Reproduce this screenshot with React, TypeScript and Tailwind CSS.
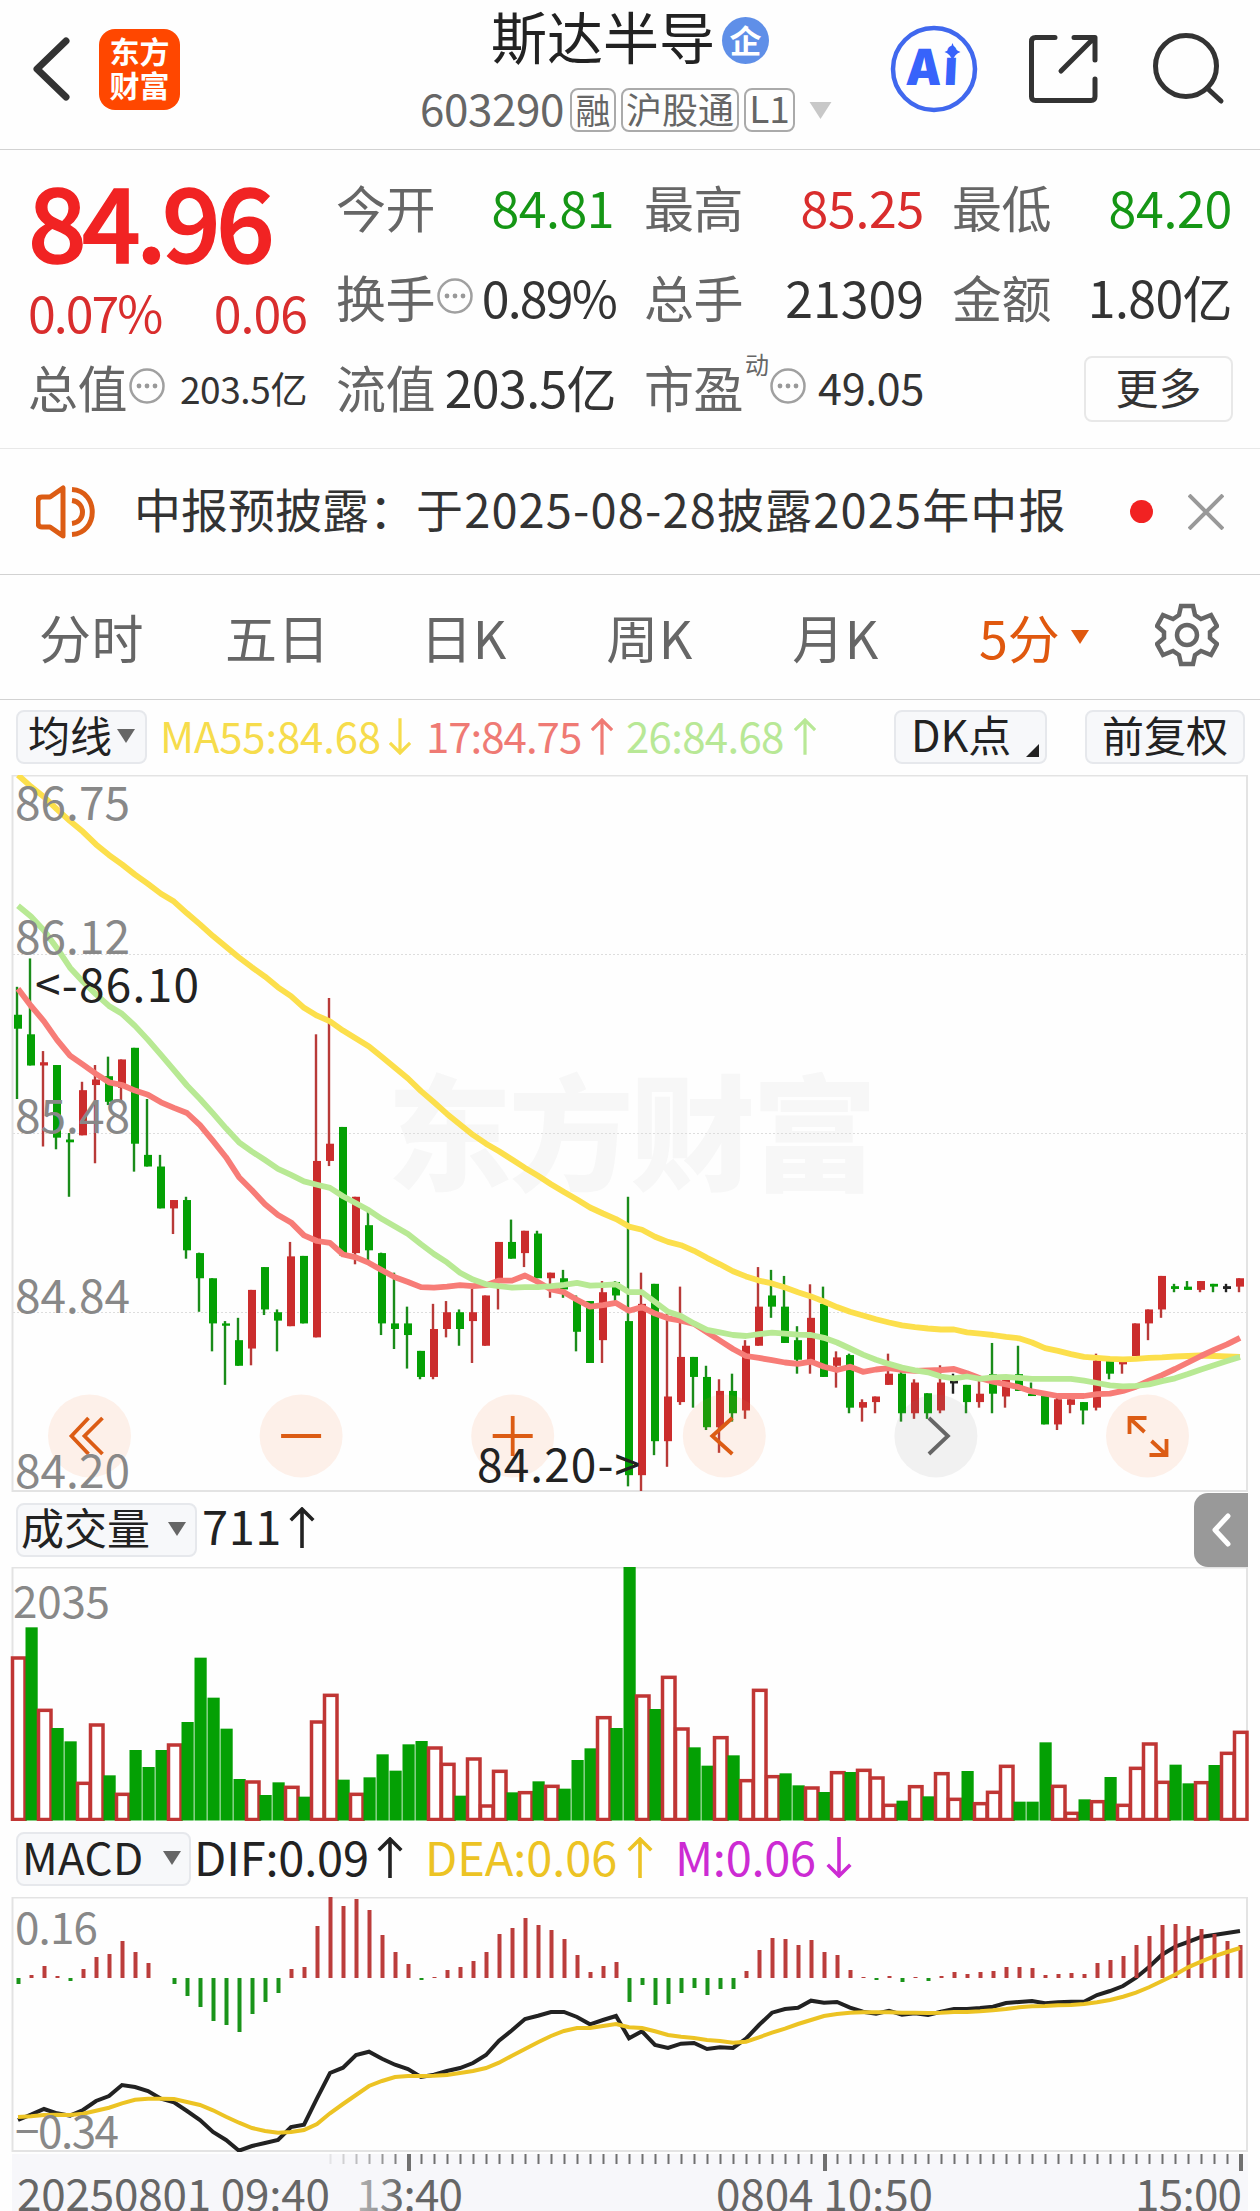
import clsx from "clsx";

type Candle = [string, number, number, number, number];

// color, high, body top, body bottom, low
const candles: Candle[] = [
  ["g", 466, 526, 556, 707], ["g", 405, 568, 635, 635], ["r", 604, 628, 635, 809], ["g", 634, 634, 790, 815],
  ["g", 780, 794, 800, 917], ["r", 670, 688, 785, 785], ["r", 634, 665, 677, 845], ["g", 616, 658, 713, 720],
  ["r", 622, 622, 683, 715], ["g", 597, 597, 803, 863], ["g", 707, 827, 852, 852], ["g", 827, 852, 942, 942],
  ["r", 924, 924, 942, 997], ["g", 917, 924, 1032, 1050], ["g", 1037, 1038, 1092, 1164], ["g", 1092, 1092, 1189, 1249],
  ["g", 1184, 1189, 1194, 1321], ["g", 1177, 1225, 1280, 1280], ["r", 1117, 1117, 1243, 1279], ["g", 1068, 1068, 1159, 1171],
  ["g", 1159, 1165, 1183, 1249], ["r", 1014, 1045, 1195, 1195], ["g", 1044, 1044, 1189, 1189], ["r", 568, 840, 1219, 1219],
  ["r", 490, 803, 840, 851], ["g", 767, 767, 1043, 1043], ["r", 917, 917, 1038, 1062], ["g", 948, 978, 1032, 1056],
  ["g", 1037, 1038, 1189, 1214], ["g", 1080, 1189, 1201, 1244], ["g", 1153, 1189, 1214, 1286], ["g", 1248, 1248, 1304, 1309],
  ["r", 1147, 1201, 1304, 1309], ["r", 1141, 1165, 1201, 1219], ["g", 1159, 1165, 1201, 1237], ["r", 1115, 1165, 1184, 1274],
  ["r", 1129, 1129, 1237, 1237], ["r", 1014, 1014, 1095, 1159], ["g", 966, 1014, 1050, 1050], ["r", 990, 990, 1038, 1068],
  ["g", 990, 996, 1092, 1092], ["r", 1080, 1080, 1092, 1134], ["g", 1074, 1092, 1116, 1134], ["g", 1129, 1140, 1207, 1249],
  ["g", 1141, 1141, 1274, 1274], ["r", 1098, 1122, 1225, 1274], ["g", 1098, 1100, 1129, 1141], ["g", 917, 1184, 1515, 1539],
  ["r", 1080, 1147, 1515, 1549], ["g", 1104, 1104, 1442, 1472], ["r", 1165, 1346, 1442, 1497], ["r", 1110, 1261, 1358, 1364],
  ["g", 1261, 1261, 1304, 1370], ["g", 1280, 1304, 1412, 1418], ["r", 1309, 1334, 1412, 1467], ["g", 1297, 1334, 1382, 1400],
  ["r", 1225, 1237, 1376, 1394], ["r", 1068, 1153, 1237, 1237], ["g", 1074, 1129, 1153, 1177], ["g", 1087, 1153, 1231, 1231],
  ["g", 1195, 1225, 1267, 1297], ["r", 1105, 1177, 1270, 1297], ["g", 1110, 1147, 1304, 1304], ["r", 1249, 1262, 1280, 1327],
  ["g", 1254, 1257, 1370, 1382], ["r", 1352, 1358, 1370, 1400], ["r", 1346, 1346, 1358, 1382], ["r", 1254, 1297, 1321, 1321],
  ["g", 1285, 1297, 1382, 1400], ["r", 1309, 1316, 1382, 1394], ["g", 1339, 1339, 1382, 1394], ["r", 1279, 1316, 1376, 1382],
  ["k", 1297, 1312, 1318, 1340], ["g", 1321, 1321, 1358, 1382], ["r", 1309, 1340, 1358, 1370], ["g", 1231, 1298, 1340, 1382],
  ["r", 1309, 1310, 1346, 1370], ["g", 1237, 1298, 1334, 1334], ["g", 1316, 1340, 1345, 1345], ["g", 1340, 1345, 1406, 1406],
  ["r", 1345, 1352, 1406, 1418], ["r", 1352, 1352, 1364, 1382], ["g", 1358, 1358, 1376, 1406], ["r", 1254, 1269, 1370, 1376],
  ["g", 1269, 1270, 1297, 1309], ["r", 1269, 1271, 1277, 1297], ["r", 1189, 1189, 1259, 1259], ["r", 1159, 1159, 1189, 1225],
  ["r", 1087, 1087, 1159, 1177], ["g", 1104, 1109, 1115, 1122], ["g", 1098, 1110, 1117, 1117], ["r", 1098, 1098, 1117, 1122],
  ["g", 1104, 1104, 1110, 1122], ["k", 1104, 1109, 1115, 1122], ["r", 1092, 1092, 1110, 1122],
];

const ma55 = [
  11, 36, 58, 85, 110, 133, 160, 183, 203, 225, 245, 266, 283, 308, 332, 357, 380, 403, 424, 444, 467, 486, 511, 528,
  540, 560, 577, 594, 617, 640, 663, 690, 714, 739, 762, 784, 803, 819, 837, 855, 872, 890, 907, 923, 940, 953, 965, 981,
  988, 1003, 1014, 1021, 1033, 1048, 1062, 1077, 1088, 1097, 1103, 1112, 1122, 1131, 1142, 1154, 1164, 1172, 1180, 1187,
  1193, 1197, 1200, 1202, 1202, 1208, 1211, 1214, 1218, 1221, 1230, 1242, 1248, 1255, 1261, 1263, 1265, 1266, 1265, 1263,
  1262, 1260, 1259, 1258, 1259, 1260, 1261,
];

const ma26 = [
  292, 315, 345, 383, 425, 455, 482, 507, 524, 550, 580, 612, 645, 678, 707, 738, 770, 800, 820, 838, 857, 870, 884, 891,
  898, 916, 931, 946, 965, 981, 997, 1019, 1040, 1058, 1080, 1095, 1105, 1109, 1112, 1111, 1111, 1109, 1106, 1102, 1108,
  1107, 1105, 1122, 1122, 1143, 1164, 1173, 1189, 1203, 1208, 1214, 1216, 1212, 1209, 1211, 1213, 1214, 1220, 1230, 1243,
  1256, 1267, 1276, 1284, 1290, 1294, 1303, 1307, 1303, 1308, 1305, 1304, 1306, 1308, 1308, 1308, 1308, 1312, 1317, 1322,
  1324, 1323, 1320, 1313, 1307, 1298, 1288, 1279, 1270, 1261,
];

const ma17 = [
  470, 507, 540, 580, 614, 633, 653, 671, 677, 689, 698, 714, 726, 737, 763, 797, 832, 875, 903, 933, 956, 972, 1000,
  1012, 1016, 1041, 1047, 1059, 1075, 1090, 1100, 1111, 1112, 1110, 1107, 1109, 1107, 1097, 1097, 1086, 1100, 1116, 1122,
  1138, 1153, 1150, 1145, 1162, 1154, 1168, 1178, 1183, 1190, 1208, 1226, 1244, 1259, 1263, 1268, 1273, 1276, 1271, 1282,
  1289, 1282, 1293, 1288, 1285, 1289, 1291, 1290, 1289, 1287, 1296, 1307, 1314, 1320, 1326, 1335, 1340, 1345, 1345, 1345,
  1341, 1340, 1334, 1325, 1312, 1300, 1287, 1273, 1259, 1246, 1234, 1220,
];

// negative = green bar
const volumes = [
  498, -412, 655, -714, -754, 874, 699, -856, 907, -780, -831, -780, 759, -696, -503, -623, -716, -867, 870, -915, -877,
  886, -920, 690, 610, -869, 907, -862, -793, -842, -763, -753, 768, 817, -917, 801, 942, 838, -907, 902, -874, 883, -896,
  -810, -775, 677, -714, -231, 612, -657, 556, 711, -772, -827, 737, -796, 866, 595, 854, -850, -886, 888, -906, 842, -846,
  835, 858, 940, -932, 884, -919, 845, 922, -843, 935, 901, 823, -935, -935, -757, 883, 964, -928, 929, -861, 940, 829,
  756, 871, -824, -880, 872, -825, 784, 721,
];

const macd = [
  492, 465, 438, 468, 483, 447, 411, 402, 363, 396, 429, 474, 492, 528, 561, 603, 615, 636, 582, 546, 519, 447, 441, 318,
  231, 258, 237, 270, 345, 396, 432, 480, 471, 450, 441, 423, 396, 342, 324, 294, 315, 330, 357, 405, 456, 438, 426, 546,
  495, 555, 552, 519, 504, 525, 507, 507, 453, 390, 354, 357, 375, 360, 396, 405, 450, 471, 480, 468, 486, 471, 483, 468,
  456, 462, 456, 453, 441, 441, 444, 465, 462, 459, 462, 429, 420, 408, 375, 348, 315, 312, 318, 327, 342, 363, 375,
];

const dif = [
  900, 884, 867, 880, 887, 870, 843, 828, 795, 801, 813, 836, 847, 873, 900, 936, 960, 992, 978, 969, 960, 921, 914, 835,
  759, 743, 705, 695, 716, 734, 747, 771, 764, 753, 744, 729, 705, 662, 631, 597, 587, 576, 576, 591, 613, 600, 588, 655,
  634, 675, 684, 671, 669, 687, 682, 684, 656, 615, 578, 567, 563, 542, 548, 546, 563, 575, 581, 572, 584, 580, 585, 575,
  567, 567, 564, 560, 549, 546, 543, 550, 547, 545, 545, 525, 513, 498, 473, 441, 404, 380, 366, 351, 345, 339, 333,
];

const dea = [
  891, 889, 885, 884, 885, 881, 872, 863, 850, 839, 836, 836, 837, 846, 855, 871, 890, 908, 924, 933, 938, 936, 930, 912,
  880, 852, 825, 798, 783, 771, 768, 768, 767, 765, 759, 753, 744, 728, 707, 687, 667, 648, 633, 624, 624, 618, 612, 622,
  624, 634, 645, 650, 654, 660, 663, 668, 665, 652, 638, 626, 612, 600, 588, 582, 578, 577, 577, 577, 578, 578, 579, 578,
  576, 576, 574, 571, 567, 562, 559, 558, 556, 555, 552, 547, 540, 530, 518, 502, 483, 464, 442, 425, 409, 396, 384,
];

const colors: Record<string, string> = { r: "#cb2d2d", g: "#04a004", k: "#222222" };
const wicks: Record<string, string> = { r: "#b83a38", g: "#1a8c1a", k: "#222222" };

const barX = (i: number) => 18 + i * 13;
const priceY = (v: number) => ((v - 11) * 716) / 1538;
const subY = (v: number) => (v - 231) / 3;

const toPoints = (data: number[], y: (v: number) => number) =>
  data.map((v, i) => `${barX(i)},${y(v).toFixed(1)}`).join(" ");

const Arrow = ({ down, className }: { down?: boolean; className?: string }) => (
  <svg viewBox="0 0 24 40" className={className} fill="none" stroke="currentColor" strokeWidth="3.5">
    {down ? <path d="M12 0V38M1 27l11 11 11-11" /> : <path d="M12 40V2M1 13L12 2l11 11" />}
  </svg>
);

const Caret = ({ className }: { className?: string }) => (
  <svg viewBox="0 0 18 14" className={className} fill="currentColor">
    <path d="M0 0h18L9 14z" />
  </svg>
);

const More = ({ className }: { className?: string }) => (
  <svg viewBox="0 0 36 36" className={clsx("h-9 w-9 shrink-0", className)}>
    <circle cx="18" cy="18" r="16.5" fill="none" stroke="#a0a0a0" strokeWidth="2.5" />
    <circle cx="10" cy="18" r="2.4" fill="#999" />
    <circle cx="18" cy="18" r="2.4" fill="#999" />
    <circle cx="26" cy="18" r="2.4" fill="#999" />
  </svg>
);

const Header = () => (
  <header className="flex h-[150px] border-b border-[#d2d2d2]">
    <svg viewBox="0 0 38 66" className="mt-9 ml-8 h-[66px] w-[38px]" fill="none" stroke="#333" strokeWidth="7" strokeLinecap="round" strokeLinejoin="round">
      <path d="M34 5L5 33l29 28" />
    </svg>
    <div className="mt-[29px] ml-[29px] flex h-[81px] w-[81px] flex-col items-center justify-center rounded-[16px] bg-[#ff4700] pb-1.5 text-[30px] leading-[34px] font-bold text-white">
      <span>东方</span>
      <span>财富</span>
    </div>
    <div className="ml-[240px] w-[420px]">
      <div className="ml-[71px] flex h-[78px] items-start">
        <h1 className="mt-[4px] w-[228px] text-[56px] leading-[62px] whitespace-nowrap text-[#222]">斯达半导</h1>
        <span className="mt-[17px] ml-[3px] flex h-[47px] w-[47px] items-center justify-center rounded-full bg-[#5f8fe8] pb-1 text-[32px] leading-none font-bold text-white">
          企
        </span>
      </div>
      <div className="mt-[9px] flex h-[46px] items-center text-[#666]">
        <span className="w-[150px] pb-1.5 text-[44px] leading-none tracking-[-0.4px]">603290</span>
        <span className="flex h-11 w-[46px] items-center justify-center rounded-[8px] border-2 border-[#aaa] pb-1 text-[35px] leading-none">融</span>
        <span className="ml-[5px] flex h-11 w-[118px] items-center justify-center rounded-[8px] border-2 border-[#aaa] pb-1 text-[36px] leading-none">
          沪股通
        </span>
        <span className="ml-[5px] flex h-11 w-[51px] items-center justify-center rounded-[8px] border-2 border-[#aaa] pb-1.5 text-[37px] leading-none">L1</span>
        <Caret className="ml-[12px] h-[17px] w-[27px] text-[#c8c8c8]" />
      </div>
    </div>
    <div className="relative mt-[25px] ml-[50px] h-[88px] w-[88px]">
      <svg viewBox="0 0 88 88" className="h-full w-full">
        <circle cx="44" cy="44" r="41" fill="none" stroke="#4068ee" strokeWidth="4.5" />
        <path d="M62.500 18q2 7 8 9q-6 2-8 9q-2-7-8-9q6-2 8-9z" fill="#3763fb" />
      </svg>
      <span className="absolute top-[16px] left-[16px] origin-left -skew-x-3 scale-x-90 font-['Inter'] text-[50px] leading-[52px] font-black tracking-[3px] text-[#3763fb]">
        Ai
      </span>
    </div>
    <svg viewBox="0 0 72 72" className="mt-[33px] ml-[49px] h-[72px] w-[72px]" fill="none" stroke="#333" strokeWidth="5" strokeLinecap="round" strokeLinejoin="round">
      <path d="M28 4.500H8.500Q4.500 4.500 4.500 8.500V63.500Q4.500 67.500 8.500 67.500H64Q68 67.500 68 63.500V46M34 38L66 6M47 4.500H68V27" />
    </svg>
    <svg viewBox="0 0 72 72" className="mt-[33px] ml-[54px] h-[72px] w-[72px]" fill="none" stroke="#333" strokeWidth="5" strokeLinecap="round">
      <circle cx="33" cy="33" r="30.500" />
      <path d="M54 55l14 13" />
    </svg>
  </header>
);

const Cell = ({ label, value, tone }: { label: string; value: string; tone: string }) => (
  <div className="flex h-[90px] items-center justify-between">
    <span className="text-[50px] leading-none tracking-[-0.500px] text-[#666]">{label}</span>
    <span className={clsx("mr-[2px] text-[50px] leading-none whitespace-nowrap", tone)}>{value}</span>
  </div>
);

const Quote = () => (
  <section className="grid h-[299px] grid-cols-[282px_282px_282px_282px] gap-x-[26px] border-b border-[#e8e8e8] px-7 pt-[11px]">
    <div className="text-[#d92d2d]">
      <div className="h-[120px] pt-0.5 text-[103px] leading-[112px] font-medium tracking-[-4.700px] text-[#f12323] [-webkit-text-stroke:1.5px_#f12323]">
        84.96
      </div>
      <div className="flex h-[60px] items-center justify-between text-[50px] leading-none">
        <span className="tracking-[-2px]">0.07%</span>
        <span className="mr-[3px] tracking-[-1px]">0.06</span>
      </div>
      <div className="flex h-[90px] items-center text-[50px] leading-none tracking-[-0.500px] text-[#666]">
        <span>总值</span>
        <More className="ml-[2px]" />
        <span className="mr-[3px] ml-auto pt-1 text-[37px] tracking-[-0.400px] whitespace-nowrap text-[#333]">203.5亿</span>
      </div>
    </div>
    <div>
      <Cell label="今开" value="84.81" tone="text-[#159615] tracking-[-0.500px] pr-[2px]" />
      <div className="flex h-[90px] items-center text-[50px] leading-none tracking-[-0.500px] text-[#666]">
        <span>换手</span>
        <More className="ml-[2px]" />
        <span className="mr-[2px] ml-auto text-[50px] tracking-[-1.800px] text-[#333]">0.89%</span>
      </div>
      <Cell label="流值" value="203.5亿" tone="text-[#333] text-[49px] tracking-[-0.600px]" />
    </div>
    <div>
      <Cell label="最高" value="85.25" tone="text-[#d92d2d] tracking-[-0.300px]" />
      <Cell label="总手" value="21309" tone="text-[#333]" />
      <div className="flex h-[90px] items-center text-[50px] leading-none tracking-[-0.500px] text-[#666]">
        <span>市盈</span>
        <span className="mb-[44px] ml-[2px] text-[24px] leading-none">动</span>
        <More className="ml-px" />
        <span className="mr-[2px] ml-auto text-[43px] tracking-[-0.300px] text-[#333]">49.05</span>
      </div>
    </div>
    <div>
      <Cell label="最低" value="84.20" tone="text-[#159615] tracking-[-0.300px]" />
      <Cell label="金额" value="1.80亿" tone="text-[#333] tracking-[-0.600px]" />
      <div className="flex h-[90px] items-center justify-end">
        <button className="mt-[6px] mr-px h-[66px] w-[149px] rounded-[8px] border-2 border-[#e8e8e8] pb-1.5 text-[43px] leading-none text-[#333]">
          更多
        </button>
      </div>
    </div>
  </section>
);

const Notice = () => (
  <section className="flex h-[126px] items-center border-b border-[#d2d2d2]">
    <svg viewBox="0 0 60 54" className="ml-9 h-[54px] w-[60px]" fill="none" stroke="#dc5c14" strokeWidth="5" strokeLinejoin="round">
      <path d="M27 3v48L14 42H6q-4 0-4-4V16q0-4 4-4h8z" />
      <path d="M36 4.500C63 6 63 48 36 49.500M36 15.500C50 17 50 37 36 38.500" />
    </svg>
    <p className="ml-[38px] w-[960px] pb-2 text-[47px] leading-none whitespace-nowrap text-[#333]">
      中报预披露：<span className="tracking-[1.150px]">于2025-08-28披露2025年中报</span>
    </p>
    <span className="ml-[36px] h-[23px] w-[23px] rounded-full bg-[#f12222]" />
    <svg viewBox="0 0 36 36" className="ml-[35px] h-9 w-9" stroke="#999" strokeWidth="4">
      <path d="M1 1l34 34M35 1L1 35" />
    </svg>
  </section>
);

const tabs = ["分时", "五日", "日K", "周K", "月K"];

const Tabs = () => (
  <nav className="flex h-[125px] items-center border-b border-[#d2d2d2] text-[52px] leading-none text-[#666]">
    {tabs.map((tab) => (
      <button key={tab} className="w-[186px] pr-[3px] text-center tracking-[0.500px]">
        {tab}
      </button>
    ))}
    <button className="flex w-[186px] items-center pl-[49px] text-[#e0580e]">
      5分
      <Caret className="ml-[11px] h-[14px] w-[18px]" />
    </button>
    <svg viewBox="0 0 64 64" className="mb-1 ml-[39px] h-[64px] w-[64px]" fill="none" stroke="#666" strokeWidth="4.500">
      <path d="M26 3H38L40 12L46 16L56 12L62 23L55 29V35L62 41L56 52L46 48L40 52L38 61H26L24 52L18 48L8 52L2 41L9 35V29L2 23L8 12L18 16L24 12Z" />
      <circle cx="32" cy="32" r="10" />
    </svg>
  </nav>
);

const chip = "flex h-[54px] items-center rounded-[8px] border-2 border-[#e6e8ec] bg-[#f7f8fa] pb-1.5 leading-none whitespace-nowrap text-[#222]";

const MaBar = () => (
  <div className="flex h-[75px] items-center pb-0.5 text-[42px] leading-none whitespace-nowrap">
    <div className={clsx(chip, "ml-4 w-[131px] pl-[10px]")}>
      均线
      <Caret className="mt-1 ml-[5px] h-[14px] w-[18px] text-[#666]" />
    </div>
    <div className="ml-[13px] flex w-[266px] items-center text-[#f6dc4c]">
      <span className="w-[229px] pb-1 tracking-[-0.200px]">MA55:84.68</span>
      <Arrow down className="h-[37px] w-[22px]" />
    </div>
    <div className="flex w-[200px] items-center text-[#ef7a74]">
      <span className="w-[165px] pb-1 tracking-[-1px]">17:84.75</span>
      <Arrow className="h-[37px] w-[22px]" />
    </div>
    <div className="flex w-[268px] items-center text-[#b8e896]">
      <span className="w-[168px] pb-1 tracking-[-0.700px]">26:84.68</span>
      <Arrow className="h-[37px] w-[22px]" />
    </div>
    <div className={clsx(chip, "w-[153px] pl-[15px]")}>
      <span className="w-[101px] text-[43px]">DK点</span>
      <svg viewBox="0 0 13 13" className="mt-[34px] ml-[14px] h-[13px] w-[13px]" fill="#222">
        <path d="M13 0v13H0z" />
      </svg>
    </div>
    <div className={clsx(chip, "ml-[38px] w-[160px] justify-center")}>前复权</div>
  </div>
);

const controls = [
  <path d="M-1-18L-18 0l17 18M13-18L-5 0l18 18" />,
  <path d="M-20 0H20" />,
  <path d="M-20 0H20M0-20V20" />,
  <path d="M8-18L-12 0L8 18" />,
  <path d="M-7-18L12 0L-7 18" />,
  <path d="M-18-2V-18H-1M-18-18L-3-4M19 3V19H2M19 19L4 5" />,
];

const PriceChart = () => (
  <svg viewBox="0 0 1260 717" className="block h-[717px] w-[1260px] text-[46px]">
    <text x="387" y="406" fontSize="125" fontWeight="900" fill="#f7f7f7" textLength="490">东方财富</text>
    <path d="M13 179.500H1246M13 358.500H1246M13 537.500H1246" stroke="#ddd" strokeWidth="1" strokeDasharray="2 2" />
    <rect x="12.500" y="0.500" width="1234.500" height="715.500" fill="none" stroke="#e3e3e3" strokeWidth="2" />
    {candles.map(([c, high, top, bottom, low], i) => (
      <g key={i}>
        <rect x={barX(i) - 2.2} y={priceY(high)} width="2.4" height={priceY(low) - priceY(high)} fill={wicks[c]} />
        <rect x={barX(i) - 4} y={priceY(top)} width="8" height={Math.max(priceY(bottom) - priceY(top), 2)} fill={colors[c]} />
      </g>
    ))}
    <g fill="none" strokeWidth="5.800" strokeLinejoin="round">
      <polyline points={toPoints(ma55, priceY)} stroke="#fcdf4c" />
      <polyline points={toPoints(ma17, priceY)} stroke="#f77c77" />
      <polyline points={toPoints(ma26, priceY)} stroke="#b8e994" />
    </g>
    {controls.map((icon, i) => (
      <g key={i} transform={`translate(${89.5 + i * 211.6} 661)`} stroke={i === 4 ? "#666" : "#dc5c14"} strokeWidth="3.800" fill="none">
        <circle r="41.500" fill={i === 4 ? "#808080" : "#f87c3c"} fillOpacity={i === 4 ? 0.1 : 0.11} stroke="none" />
        {icon}
      </g>
    ))}
    <g fill="#888">
      <text x="15" y="44.500" textLength="115">86.75</text>
      <text x="15" y="178.500" textLength="115">86.12</text>
      <text x="15" y="358" textLength="115">85.48</text>
      <text x="15" y="537.500" textLength="115">84.84</text>
      <text x="15" y="712.500" textLength="115">84.20</text>
    </g>
    <g fill="#222">
      <text x="35" y="227" textLength="164">&lt;-86.10</text>
      <text x="477" y="707" textLength="163">84.20-&gt;</text>
    </g>
  </svg>
);

const VolumeBar = () => (
  <div className="flex h-[75px] items-center text-[47px] leading-none text-[#222]">
    <div className={clsx(chip, "ml-4 w-[181px] pl-[3px] text-[43px]")}>
      成交量
      <Caret className="mt-1 ml-[18px] h-[14px] w-[18px] text-[#666]" />
    </div>
    <span className="ml-[5px] w-[87px] pb-2.5 tracking-[0.600px]">711</span>
    <Arrow className="mb-1 h-[41px] w-[26px]" />
    <button className="mr-3 ml-auto flex h-[74px] w-[54px] items-center justify-center rounded-l-[14px] bg-[#999]">
      <svg viewBox="0 0 20 34" className="h-[34px] w-[20px]" fill="none" stroke="#fff" strokeWidth="5" strokeLinecap="round" strokeLinejoin="round">
        <path d="M17 3L4 17l13 14" />
      </svg>
    </button>
  </div>
);

const VolumeChart = () => (
  <svg viewBox="0 0 1260 254" className="block h-[254px] w-[1260px]">
    <path d="M12.500 254V0.500H1247V254" fill="none" stroke="#e3e3e3" strokeWidth="2" />
    {volumes.map((v, i) => {
      const y = subY(Math.abs(v));
      return v < 0 ? (
        <rect key={i} x={barX(i) - 5.5} y={y} width="12.200" height={253.5 - y} fill="#04a004" />
      ) : (
        <rect key={i} x={barX(i) - 5.5} y={y + 2} width="12.500" height={250.5 - y} fill="#fff" stroke="#c03634" strokeWidth="3.500" />
      );
    })}
    <text x="13" y="51" fontSize="44" fill="#888" textLength="97">2035</text>
  </svg>
);

const MacdBar = () => (
  <div className="flex h-[76px] items-center text-[47px] leading-none whitespace-nowrap">
    <div className={clsx(chip, "ml-4 w-[175px] pl-[4px] text-[44px]")}>
      <span className="w-[123px] tracking-[0.300px]">MACD</span>
      <Caret className="mt-1 ml-[18px] h-[14px] w-[18px] text-[#666]" />
    </div>
    <div className="ml-[3px] flex w-[231px] items-center text-[#222]">
      <span className="w-[183px] pb-2 tracking-[-0.200px]">DIF:0.09</span>
      <Arrow className="mb-1 h-[41px] w-[26px]" />
    </div>
    <div className="flex w-[250px] items-center text-[#ecc324]">
      <span className="w-[202px] pb-2 tracking-[-0.100px]">DEA:0.06</span>
      <Arrow className="mb-1 h-[41px] w-[26px]" />
    </div>
    <div className="flex items-center text-[#cc2bd3]">
      <span className="w-[151px] pb-2 tracking-[-0.300px]">M:0.06</span>
      <Arrow down className="mb-1 h-[41px] w-[26px]" />
    </div>
  </div>
);

const MacdChart = () => (
  <svg viewBox="0 0 1260 255" className="block h-[255px] w-[1260px] text-[44px]">
    <rect x="12.500" y="0.500" width="1234.500" height="253.500" fill="none" stroke="#e3e3e3" strokeWidth="2" />
    <polyline points={toPoints(dif, subY)} fill="none" stroke="#222" strokeWidth="4" />
    {macd.map((v, i) => (
      <rect key={i} x={barX(i) - 1.5} y={Math.min(subY(v), 81)} width="4" height={Math.abs(subY(v) - 81)} fill={v > 474 ? "#1a941a" : "#bb3d3b"} />
    ))}
    <polyline points={toPoints(dea, subY)} fill="none" stroke="#ecc324" strokeWidth="4" />
    <g fill="#888">
      <text x="15" y="47" textLength="83">0.16</text>
      <text x="15" y="251" textLength="104">−0.34</text>
    </g>
  </svg>
);

const TimeAxis = () => (
  <svg viewBox="0 0 1260 59" className="block h-[59px] w-[1260px] text-[44px]">
    <defs>
      <linearGradient id="fade" x1="0" x2="1" y1="0" y2="0">
        <stop offset="0" stopColor="#b4b4b4" />
        <stop offset="0.2" stopColor="#999" />
        <stop offset="0.42" stopColor="#666" />
      </linearGradient>
    </defs>
    <rect x="12" y="2" width="1236" height="57" fill="#f7f7fa" />
    {Array.from({ length: 71 }, (_, n) => n + 24).map((i) => {
      const major = i === 30 || i === 62 || i === 94;
      return (
        <rect
          key={i}
          x={barX(i) - (major ? 1 : 0.5)}
          y="2"
          width={major ? 4 : 2}
          height={major ? 17 : 10}
          fill="#707070"
          opacity={Math.min((i - 23) / 7, 1)}
        />
      );
    })}
    <g fill="#666">
      <text x="17" y="58.500" textLength="313">20250801 09:40</text>
      <text x="356" y="58.500" textLength="107" fill="url(#fade)">13:40</text>
      <text x="716" y="58.500" textLength="217">0804 10:50</text>
      <text x="1135" y="58.500" textLength="107">15:00</text>
    </g>
  </svg>
);

const App = () => {
  return (
    <main className="h-[2211px] w-[1260px] overflow-hidden bg-[#fefefe] font-['Noto_Sans_CJK_SC',sans-serif]">
      <Header />
      <Quote />
      <Notice />
      <Tabs />
      <MaBar />
      <PriceChart />
      <VolumeBar />
      <VolumeChart />
      <MacdBar />
      <MacdChart />
      <TimeAxis />
    </main>
  );
};

export default App;
